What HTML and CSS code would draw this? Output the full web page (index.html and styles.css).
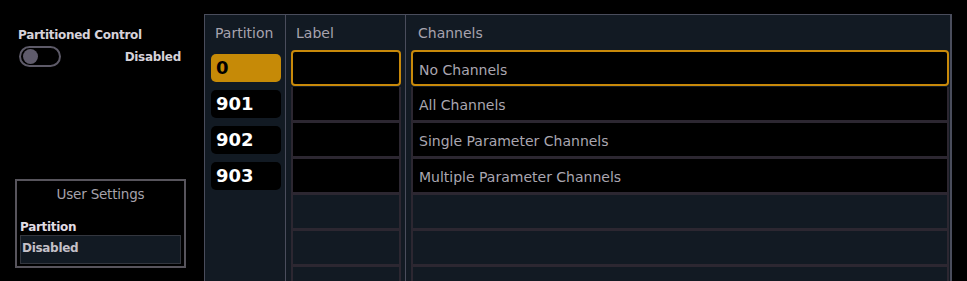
FILE: index.html
```html
<!DOCTYPE html>
<html lang="en">
<head>
    <meta charset="UTF-8">
    <title>Partitions</title>
    <link rel="stylesheet" href="styles.css">
</head>
<body>
    <div class="layout">
        <div class="sidebar">
            <div class="control-title">Partitioned Control</div>
            <div class="control-row">
                <div class="toggle"><div class="knob"></div></div>
                <div class="control-state">Disabled</div>
            </div>

            <div class="user-box">
                <div class="user-title">User Settings</div>
                <div class="user-label">Partition</div>
                <div class="user-value">Disabled</div>
            </div>
        </div>

        <div class="panel">
            <div class="col col-part">
                <div class="col-head">Partition</div>
                <div class="part-row"><div class="pill active">0</div></div>
                <div class="part-row"><div class="pill">901</div></div>
                <div class="part-row"><div class="pill">902</div></div>
                <div class="part-row"><div class="pill">903</div></div>
            </div>
            <div class="col col-label">
                <div class="col-head">Label</div>
                <div class="cell selected"></div>
                <div class="cell"></div>
                <div class="cell"></div>
                <div class="cell"></div>
                <div class="cell empty"></div>
                <div class="cell empty"></div>
                <div class="cell empty"></div>
            </div>
            <div class="col col-chan">
                <div class="col-head">Channels</div>
                <div class="cell selected">No Channels</div>
                <div class="cell">All Channels</div>
                <div class="cell">Single Parameter Channels</div>
                <div class="cell">Multiple Parameter Channels</div>
                <div class="cell empty"></div>
                <div class="cell empty"></div>
                <div class="cell empty"></div>
            </div>
        </div>
    </div>
</body>
</html>
```

FILE: styles.css
```css
body {
    margin: 0;
    background: #000;
    font-family: "DejaVu Sans", sans-serif;
    height: 281px;
    overflow: hidden;
}
.layout {
    display: flex;
}
.sidebar {
    width: 204px;
    flex-shrink: 0;
    padding-top: 28px;
    box-sizing: border-box;
}
.control-title {
    margin-left: 18px;
    font-size: 12px;
    font-weight: bold;
    color: #d6d2da;
    letter-spacing: -0.3px;
}
.control-row {
    display: flex;
    align-items: center;
    justify-content: space-between;
    margin: 4px 23px 0 19px;
}
.toggle {
    width: 42px;
    height: 21px;
    box-sizing: border-box;
    border: 2px solid #5d5a68;
    border-radius: 11px;
    padding: 1px 2px;
}
.knob {
    width: 15px;
    height: 15px;
    border-radius: 50%;
    background: #5f5b6b;
}
.control-state {
    font-size: 12px;
    font-weight: bold;
    color: #d6d2da;
    letter-spacing: -0.3px;
}
.user-box {
    margin: 112px 0 0 15px;
    width: 171px;
    height: 89px;
    box-sizing: border-box;
    border: 2px solid #57545c;
    padding: 5px 3px 0 3px;
}
.user-title {
    text-align: center;
    font-size: 13.5px;
    color: #a6a2ab;
    letter-spacing: -0.2px;
}
.user-label {
    margin-top: 18px;
    font-size: 12px;
    font-weight: bold;
    color: #e0dce4;
    letter-spacing: -0.3px;
}
.user-value {
    margin-top: 1px;
    height: 29px;
    box-sizing: border-box;
    border: 1px solid #33363e;
    background: #121a23;
    padding: 5px 1px;
    font-size: 12px;
    font-weight: bold;
    color: #c4c0c8;
    letter-spacing: -0.3px;
}
.panel {
    margin-top: 14px;
    width: 748px;
    height: 280px;
    box-sizing: border-box;
    border: 1px solid #4a4d5c;
    border-width: 1px 2px 0 1px;
    background: #121a23;
    display: grid;
    grid-template-columns: 81px 120px 1fr;
}
.col {
    border-right: 1px solid #4a4d5c;
}
.col-chan {
    border-right: none;
}
.col-head {
    height: 35px;
    box-sizing: border-box;
    padding: 10px 0 0 10px;
    font-size: 14px;
    color: #a7a3ae;
}
.col-chan .col-head {
    padding-left: 12px;
}
.part-row {
    height: 36px;
    padding: 4px 0 0 6px;
    box-sizing: border-box;
}
.pill {
    width: 70px;
    height: 28px;
    box-sizing: border-box;
    border-radius: 5px;
    background: #000;
    color: #fff;
    font-weight: bold;
    font-size: 18px;
    padding: 3px 0 0 5px;
}
.pill.active {
    background: #c68a07;
    color: #000;
}
.cell {
    height: 36px;
    box-sizing: border-box;
    margin: 0 4px 0 5px;
    background: #000;
    border: 2px solid #2c2731;
    border-top: none;
    border-bottom-width: 3px;
    font-size: 14px;
    color: #aaa6b0;
    padding: 10px 0 0 6px;
}
.col-chan .cell {
    margin-right: 1px;
}
.cell.selected {
    border: 2px solid #c8890a;
    border-radius: 4px;
    margin-bottom: 1px;
    padding-top: 10px;
}
.cell.empty {
    background: #121a23;
}
```
